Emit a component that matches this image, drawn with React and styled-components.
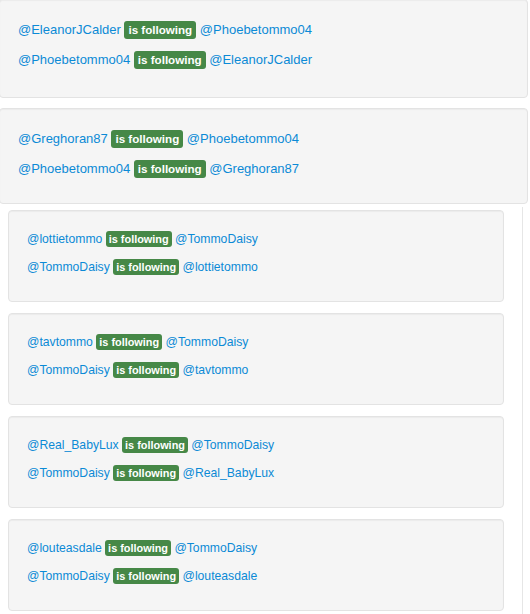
import React from "react";
import styled, { createGlobalStyle } from "styled-components";

const Global = createGlobalStyle`
  html, body { margin: 0; padding: 0; background: #fff; }
  body { font-family: "Liberation Sans", Arial, Helvetica, sans-serif; overflow: hidden; }
`;

const Page = styled.div`
  width: 530px;
  height: 614px;
  overflow: hidden;
`;

const TopStack = styled.div`
  display: flex;
  flex-direction: column;
  gap: 10px;
  width: 529px;
  margin: -1px 0 0 -1px;
`;

const LowerFrame = styled.div`
  width: 496px;
  margin-top: 3px;
  padding: 3px 18px 20px 8px;
  border-right: 1px solid #e6e6e6;
  display: flex;
  flex-direction: column;
  gap: 11px;
`;

const Well = styled.div`
  box-sizing: border-box;
  background: #f5f5f5;
  border: 1px solid #e3e3e3;
  border-radius: 4px;
  box-shadow: inset 0 1px 1px rgba(0, 0, 0, 0.04);
  display: flex;
  flex-direction: column;
  gap: ${(p) => (p.$sm ? "9px" : "10px")};
  height: ${(p) => (p.$sm ? "92px" : "auto")};
  padding: ${(p) => (p.$sm ? "19px 18px 0" : `20px 18px ${p.$pb}px`)};
  font-size: ${(p) => (p.$sm ? "12.2px" : "13px")};
  line-height: ${(p) => (p.$sm ? "19px" : "20px")};
`;

const Row = styled.div`
  white-space: nowrap;
  height: ${(p) => (p.$sm ? "19px" : "20px")};
`;

const Handle = styled.a`
  color: #0b8ad6;
  text-decoration: none;
`;

const Badge = styled.span`
  display: inline-block;
  background: #468847;
  color: #fff;
  font-weight: bold;
  border-radius: 3px;
  font-size: ${(p) => (p.$sm ? "10.9px" : "11.6px")};
  line-height: ${(p) => (p.$sm ? "12px" : "14px")};
  padding: ${(p) => (p.$sm ? "2px 3px" : "2px 4px")};
`;

const pairs = [
  ["EleanorJCalder", "Phoebetommo04", false, 27],
  ["Greghoran87", "Phoebetommo04", false, 24],
  ["lottietommo", "TommoDaisy", true],
  ["tavtommo", "TommoDaisy", true],
  ["Real_BabyLux", "TommoDaisy", true],
  ["louteasdale", "TommoDaisy", true],
];

const Follow = ({ a, b, sm }) => (
  <Row $sm={sm}>
    <Handle href="#">@{a}</Handle> <Badge $sm={sm}>is following</Badge>{" "}
    <Handle href="#">@{b}</Handle>
  </Row>
);

const Pair = ({ a, b, sm, pb }) => (
  <Well $sm={sm} $pb={pb}>
    <Follow a={a} b={b} sm={sm} />
    <Follow a={b} b={a} sm={sm} />
  </Well>
);

export default function App() {
  return (
    <Page>
      <Global />
      <TopStack>
        {pairs
          .filter((p) => !p[2])
          .map(([a, b, , pb]) => (
            <Pair key={a} a={a} b={b} pb={pb} />
          ))}
      </TopStack>
      <LowerFrame>
        {pairs
          .filter((p) => p[2])
          .map(([a, b]) => (
            <Pair key={a} a={a} b={b} sm />
          ))}
      </LowerFrame>
    </Page>
  );
}
